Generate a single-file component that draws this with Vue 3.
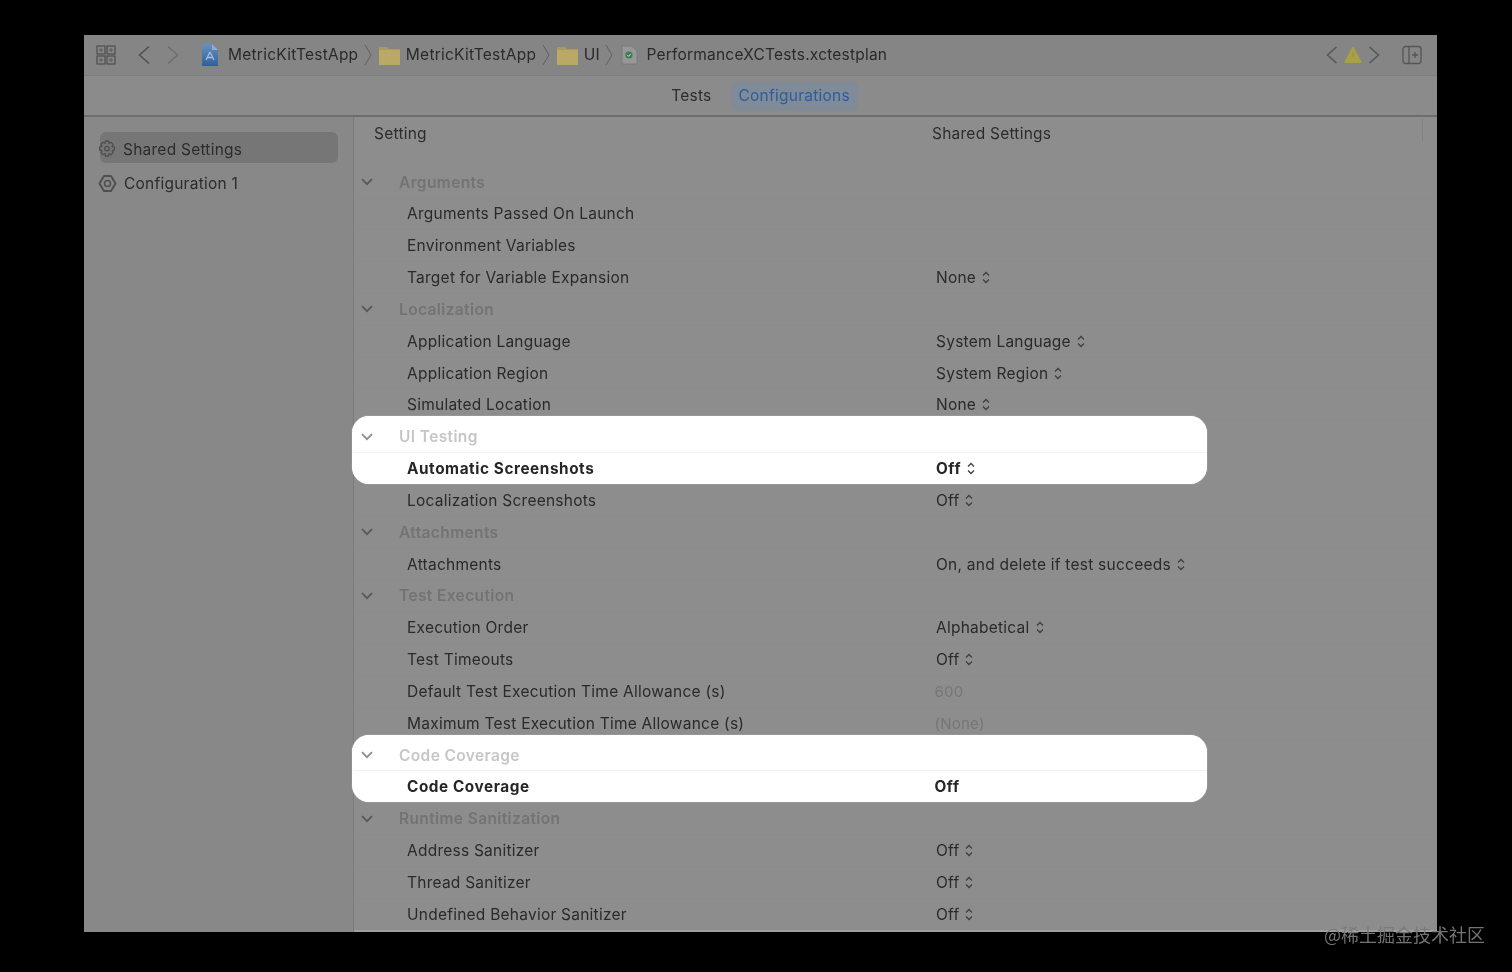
<script setup>
const sections = [
  { title: 'Arguments', rows: [
    { label: 'Arguments Passed On Launch' },
    { label: 'Environment Variables' },
    { label: 'Target for Variable Expansion', value: 'None', picker: true },
  ] },
  { title: 'Localization', rows: [
    { label: 'Application Language', value: 'System Language', picker: true },
    { label: 'Application Region', value: 'System Region', picker: true },
    { label: 'Simulated Location', value: 'None', picker: true },
  ] },
  { title: 'UI Testing', hl: 'hl-first', rows: [
    { label: 'Automatic Screenshots', value: 'Off', picker: true },
  ], after: [
    { label: 'Localization Screenshots', value: 'Off', picker: true },
  ] },
  { title: 'Attachments', rows: [
    { label: 'Attachments', value: 'On, and delete if test succeeds', picker: true },
  ] },
  { title: 'Test Execution', rows: [
    { label: 'Execution Order', value: 'Alphabetical', picker: true },
    { label: 'Test Timeouts', value: 'Off', picker: true },
    { label: 'Default Test Execution Time Allowance (s)', value: '600', disabled: true },
    { label: 'Maximum Test Execution Time Allowance (s)', value: '(None)', disabled: true },
  ] },
  { title: 'Code Coverage', hl: 'hl-second', rows: [
    { label: 'Code Coverage', value: 'Off', tight: true },
  ] },
  { title: 'Runtime Sanitization', rows: [
    { label: 'Address Sanitizer', value: 'Off', picker: true },
    { label: 'Thread Sanitizer', value: 'Off', picker: true },
    { label: 'Undefined Behavior Sanitizer', value: 'Off', picker: true },
  ] },
]
</script>

<template>
  <div class="page">
    <div class="window">
      <header class="toolbar">
        <svg class="ic-grid" width="20" height="20" viewBox="0 0 20 20" fill="none" stroke="#4e4e4e" stroke-width="1.200">
          <rect x="1" y="1" width="8" height="8" /><rect x="11" y="1" width="8" height="8" />
          <rect x="1" y="11" width="8" height="8" /><rect x="11" y="11" width="8" height="8" />
          <path d="M4 4h2v2H4zM14 4h2v2h-2zM4 14h2v2H4zM14 14h2v2h-2z" stroke-width=".7" />
        </svg>
        <svg class="ic-back" width="14" height="20" viewBox="0 0 14 20" fill="none" stroke="#505050" stroke-width="1.600"><path d="M12 1.500 2.500 10 12 18.500" /></svg>
        <svg class="ic-fwd" width="14" height="20" viewBox="0 0 14 20" fill="none" stroke="#6f6f6f" stroke-width="1.600"><path d="M2 1.500 11.500 10 2 18.500" /></svg>
        <div class="crumbs">
          <svg class="ic-app" width="18" height="22" viewBox="0 0 18 22">
            <defs>
              <linearGradient id="appdoc" x1="0" y1="0" x2="0" y2="1">
                <stop offset="0" stop-color="#6a90bd" />
                <stop offset="1" stop-color="#2f5f9c" />
              </linearGradient>
            </defs>
            <path d="M1 0h10l6 6v16H1z" fill="url(#appdoc)" />
            <path d="M11 0l6 6h-6z" fill="#8faccd" />
            <path d="M9 8l4 8M9 8l-4 8M6 13.500h6" stroke="#a6bedb" stroke-width="1.300" fill="none" />
          </svg>
          <span class="crumb">MetricKitTestApp</span>
          <svg class="sep" width="8" height="22" viewBox="0 0 8 22" fill="none" stroke="#5f5f5f" stroke-width="1"><path d="M1 1l6 10-6 10" /></svg>
          <svg class="folder" width="21" height="19" viewBox="0 0 21 19"><path d="M0 1h8l2 2h11v16H0z" fill="#ab9a5c" /><rect y="4" width="21" height="15" fill="#bba866" /></svg>
          <span class="crumb">MetricKitTestApp</span>
          <svg class="sep" width="8" height="22" viewBox="0 0 8 22" fill="none" stroke="#5f5f5f" stroke-width="1"><path d="M1 1l6 10-6 10" /></svg>
          <svg class="folder" width="21" height="19" viewBox="0 0 21 19"><path d="M0 1h8l2 2h11v16H0z" fill="#ab9a5c" /><rect y="4" width="21" height="15" fill="#bba866" /></svg>
          <span class="crumb">UI</span>
          <svg class="sep" width="8" height="22" viewBox="0 0 8 22" fill="none" stroke="#5f5f5f" stroke-width="1"><path d="M1 1l6 10-6 10" /></svg>
          <svg class="ic-plan" width="17" height="20" viewBox="0 0 17 20">
            <path d="M1 1h10l5 5v13H1z" fill="#979797" stroke="#777" stroke-width=".8" />
            <circle cx="8" cy="10" r="3.600" fill="#3d7f50" />
            <path d="M6.300 10l1.300 1.400 2.200-2.600" stroke="#c7d8c9" stroke-width="1" fill="none" />
          </svg>
          <span class="crumb file">PerformanceXCTests.xctestplan</span>
        </div>
        <div class="tool-right">
          <svg width="12" height="20" viewBox="0 0 12 20" fill="none" stroke="#555" stroke-width="1.500"><path d="M10.500 2 1.500 10l9 8" /></svg>
          <svg class="warn" width="18" height="18" viewBox="0 0 18 18"><path d="M9 2 16.500 16H1.500z" fill="#a8a044" stroke="#a8a044" stroke-linejoin="round" stroke-width="2" /><path d="M9 6.500v5" stroke="#9a9044" stroke-width="1.500" /></svg>
          <svg width="12" height="20" viewBox="0 0 12 20" fill="none" stroke="#555" stroke-width="1.500"><path d="M1.500 2l9 8-9 8" /></svg>
          <svg class="panel" width="20" height="20" viewBox="0 0 20 20" fill="none" stroke="#555" stroke-width="1.300">
            <rect x="1" y="1.500" width="18" height="17" rx="2.500" /><path d="M7 1.500v17M13 7v6M10 10h6" />
          </svg>
        </div>
      </header>

      <nav class="tabs">
        <span class="tab">Tests</span>
        <span class="tab active">Configurations</span>
      </nav>

      <div class="body">
        <aside class="sidebar">
          <div class="side-item selected">
            <svg width="18" height="18" viewBox="0 0 18 18" fill="none" stroke="#4f4f4f" stroke-width="1.300">
              <path d="M7.500 1h3l.5 2.200 2-.9 2.100 2.100-1 2 2.200.6v3l-2.200.6 1 2-2.100 2.100-2-1-.5 2.300h-3L7 13.700l-2 1-2.100-2.100 1-2L1.700 10V7l2.200-.6-1-2L5 2.300l2 .9z" stroke-linejoin="round" />
              <circle cx="9" cy="8.600" r="2.300" />
            </svg>
            <span>Shared Settings</span>
          </div>
          <div class="side-item config">
            <svg width="19" height="19" viewBox="0 0 19 19" fill="none" stroke="#4f4f4f" stroke-width="2">
              <path d="M6 2h7l4.500 7.500L13 17H6L1.500 9.500z" stroke-linejoin="round" />
              <circle cx="9.500" cy="9.500" r="3" stroke-width="1.600" />
            </svg>
            <span>Configuration 1</span>
          </div>
        </aside>

        <main class="table">
          <div class="thead">
            <span class="th-setting">Setting</span>
            <span class="th-shared">Shared Settings</span>
          </div>
          <template v-for="s in sections" :key="s.title">
            <div :class="s.hl ? ['hl-group', s.hl] : null">
              <div class="row section">
                <svg class="chev" width="12" height="8" viewBox="0 0 12 8" fill="none" stroke-width="1.800"><path d="M1 1.200 6 6.200l5-5" /></svg>
                <span class="section-title">{{ s.title }}</span>
              </div>
              <div v-for="r in s.rows" :key="r.label" class="row item" :class="{ strong: s.hl }">
                <span class="label">{{ r.label }}</span>
                <span v-if="r.value" class="value" :class="{ muted: r.disabled, tight: r.tight || r.disabled }">
                  {{ r.value }}
                  <svg v-if="r.picker" class="updown" width="8" height="13" viewBox="0 0 8 13" fill="none" stroke-width="1.300"><path d="M1 4.500 4 1.500l3 3M1 8.500l3 3 3-3" /></svg>
                </span>
              </div>
            </div>
            <div v-for="r in s.after || []" :key="r.label" class="row item">
              <span class="label">{{ r.label }}</span>
              <span class="value">
                {{ r.value }}
                <svg class="updown" width="8" height="13" viewBox="0 0 8 13" fill="none" stroke-width="1.300"><path d="M1 4.500 4 1.500l3 3M1 8.500l3 3 3-3" /></svg>
              </span>
            </div>
          </template>
        </main>
      </div>
    </div>
    <div class="watermark">@稀土掘金技术社区</div>
  </div>
</template>

<style scoped>
.page {
  position: relative;
  width: 1512px;
  height: 972px;
  background: #000;
  overflow: hidden;
  padding: 35px 0 0 84px;
  box-sizing: border-box;
  font-family: Inter, "Liberation Sans", sans-serif;
  font-size: 15.500px;
  letter-spacing: 0.24px;
  color: #2c2c2c;
}
.window {
  width: 1353px;
  height: 897px;
  background: #8d8d8d;
  display: flex;
  flex-direction: column;
  overflow: hidden;
  filter: blur(0.55px);
  box-shadow: inset 0 -2px 0 #a0a0a0;
}
.toolbar {
  height: 41px;
  flex: none;
  background: #858585;
  border-bottom: 1px solid #7e7e7e;
  box-sizing: border-box;
  display: flex;
  align-items: center;
  padding: 0 15px 0 12px;
}
.ic-back { margin-left: 21px; }
.ic-fwd { margin-left: 15px; }
.crumbs { display: flex; align-items: center; margin-left: 21px; }
.crumb { line-height: 22px; white-space: nowrap; color: #2a2a2a; }
.ic-app { margin-right: 9px; }
.sep { margin: 0 7px 0 5.500px; }
.folder { margin-right: 6px; }
.ic-plan { margin: 0 8.500px 0 0.500px; }
.file { letter-spacing: 0.21px; }
.tool-right { margin-left: auto; display: flex; align-items: center; }
.warn { margin: 0 6px; }
.panel { margin-left: 22px; }
.tabs {
  height: 41px;
  flex: none;
  box-sizing: border-box;
  background: #8b8b8b;
  border-bottom: 2px solid #6e6e6e;
  display: flex;
  align-items: center;
  justify-content: center;
  gap: 11px;
  padding-top: 1px;
}
.tab { padding: 0 8px; height: 28px; line-height: 28px; border-radius: 6px; color: #2c2c2c; }
.active { background: #7f8b98; color: #2d5d9b; }
.body { flex: 1; display: flex; min-height: 0; }
.sidebar {
  flex: none;
  background: #888888;
  border-right: 1px solid #7b7b7b;
  box-sizing: content-box;
  padding: 15px 0 0 16px;
  width: 253px;
}
.side-item {
  width: 238px;
  height: 31px;
  display: flex;
  align-items: center;
  gap: 7px;
  margin-bottom: 4.500px;
  margin-left: -2px;
  border-radius: 6px;
  white-space: nowrap;
}
.side-item.selected { background: #767676; margin-left: 0; box-sizing: border-box; padding-top: 3px; }
.side-item.selected svg { margin-left: -2px; }
.table { flex: 1; min-width: 0; }
.thead {
  height: 49.700px;
  display: flex;
  align-items: flex-start;
  padding-top: 6px;
  box-sizing: border-box;
  position: relative;
  line-height: 22px;
}
.th-setting { margin-left: 20px; width: 558px; flex: none; }
.th-shared { flex: none; }
.thead::after {
  content: "";
  position: absolute;
  left: 1068px;
  top: 2px;
  height: 22px;
  width: 1px;
  background: #828282;
}
.row {
  height: 31.830px;
  box-sizing: border-box;
  display: flex;
  align-items: center;
  white-space: nowrap;
  border-bottom: 1px solid rgba(0, 0, 0, 0.012);
}
.chev { margin-left: 7px; stroke: #595959; flex: none; }
.section-title { margin-left: 26px; color: #737373; font-weight: 600; letter-spacing: 0.38px; }
.item .label { margin-left: 53px; width: 529px; flex: none; color: #2a2a2a; }
.value { display: inline-flex; align-items: center; gap: 6px; color: #2a2a2a; }
.value.muted { color: #767676; margin-left: -3px; font-size: 15px; }
.value.tight { margin-left: -1.500px; }
.updown { stroke: #3f3f3f; }
.hl-group {
  position: relative;
  width: 855px;
  margin-left: -2px;
  padding-left: 2px;
  box-sizing: border-box;
  background: #fff;
  border-radius: 17px;
  box-shadow: 0 0 1px #eee;
}
.hl-first { margin-top: -5.500px; padding-top: 5.500px; height: 68px; margin-bottom: 1.160px; }
.hl-second { margin-top: -4.500px; padding-top: 4.500px; height: 67px; margin-bottom: 1.160px; }
.hl-group .row { border-bottom-color: #f1f1f1; }
.hl-group .row:last-child { border-bottom-color: transparent; }
.hl-group .chev { stroke: #8d8d8d; }
.hl-group .section-title { color: #c6c6c6; }
.strong .label, .strong .value { color: #262626; font-weight: 700; font-size: 15.300px; letter-spacing: 0.58px; }
.watermark {
  position: absolute;
  left: 1324px;
  top: 921px;
  font-family: "Noto Sans CJK SC", sans-serif;
  font-size: 18px;
  line-height: 26px;
  letter-spacing: 0;
  color: #7a7a7a;
  white-space: nowrap;
  opacity: 0.95;
}
</style>

<style>
html, body { margin: 0; background: #000; }
</style>
